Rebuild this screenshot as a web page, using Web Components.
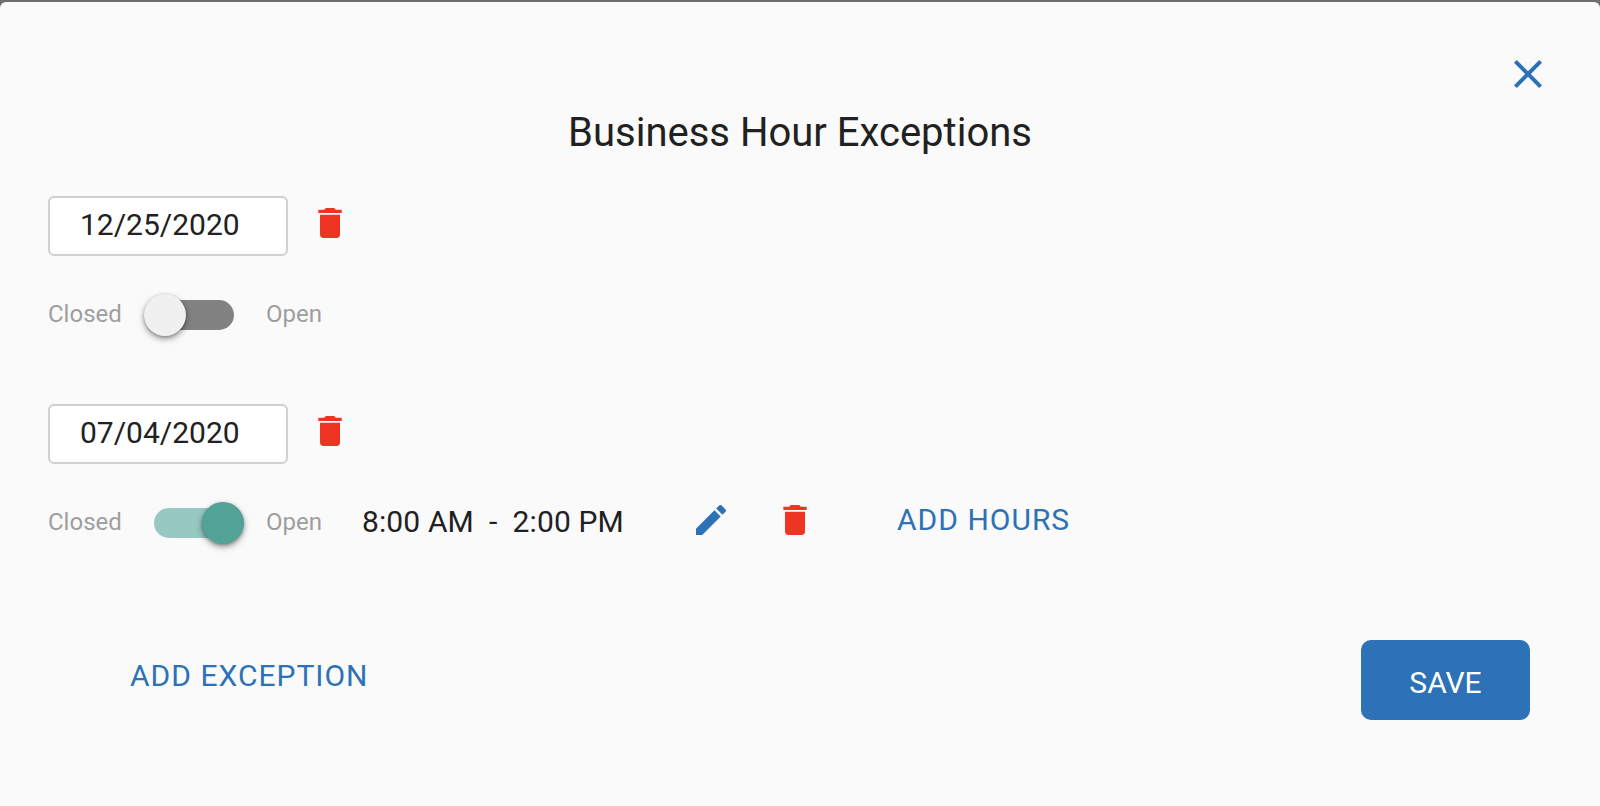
<!DOCTYPE html>
<html><head><meta charset="utf-8"><style>
html,body{margin:0;padding:0;background:#fafafa;}
body{font-family:Roboto,"Liberation Sans",sans-serif;color:#212121;}
</style></head><body>
<template id="i-trash"><style>:host{display:block;width:40px;height:40px;flex:none}svg{display:block;width:100%;height:100%;fill:#ee3524}</style><svg viewBox="0 0 24 24"><path d="M6 19c0 1.1.9 2 2 2h8c1.1 0 2-.9 2-2V7H6v12zM19 4h-3.5l-1-1h-5l-1 1H5v2h14V4z"/></svg></template>
<template id="i-edit"><style>:host{display:block;width:40px;height:40px;flex:none}svg{display:block;width:100%;height:100%;fill:#2d71b7}</style><svg viewBox="0 0 24 24"><path d="M3 17.25V21h3.75L17.81 9.94l-3.75-3.75L3 17.25zM20.71 7.04c.39-.39.39-1.02 0-1.41l-2.34-2.34c-.39-.39-1.02-.39-1.41 0l-1.83 1.83 3.75 3.75 1.83-1.83z"/></svg></template>
<template id="i-close"><style>:host{display:block;width:48px;height:48px;flex:none}svg{display:block;width:100%;height:100%;fill:#2d71b7}</style><svg viewBox="0 0 24 24"><path d="M19 6.41 17.59 5 12 10.59 6.41 5 5 6.41 10.59 12 5 17.59 6.41 19 12 13.41 17.59 19 19 17.59 13.41 12z"/></svg></template>
<template id="t-toggle"><style>
:host{display:block;position:relative;width:100px;height:42px;flex:none}
.track{position:absolute;left:10px;top:6px;width:80px;height:30px;border-radius:15px;background:#828282}
.knob{position:absolute;left:0;top:0;width:42px;height:42px;border-radius:50%;background:#f0f0f0;box-shadow:0 3px 6px rgba(0,0,0,.38),0 1px 3px rgba(0,0,0,.22)}
:host([on]) .track{background:#97c8c2}
:host([on]) .knob{left:58px;background:#52a297}
</style><div class="track"></div><div class="knob"></div></template>
<template id="t-date"><style>
:host{display:block;box-sizing:border-box;width:240px;height:60px;background:#fff;border:2px solid #d0d0d0;border-radius:6px;padding-left:30px;font-size:30px;line-height:54px;color:#212121;flex:none}
</style><slot></slot></template>
<template id="t-link"><style>
:host{display:block;color:#2d71b7;font-size:30px;letter-spacing:1px;line-height:40px;white-space:nowrap}
</style><slot></slot></template>
<template id="t-save"><style>
:host{display:flex;align-items:center;justify-content:center;box-sizing:border-box;width:169px;height:80px;padding-top:5px;background:#2d71b7;border-radius:10px;color:#fff;font-size:30px;line-height:40px;flex:none}
</style><slot></slot></template>
<template id="t-row"><style>
:host{display:block}
.date{display:flex;align-items:flex-start;gap:22px}
.date ::slotted(i-trash){margin-top:7px}
.hours{display:flex;align-items:center;height:42px;margin-top:38px}
.lab{color:#9e9e9e;font-size:24px;line-height:40px;margin-bottom:2px}
.closed{width:96px}.open{margin-left:22px;width:96px}
</style><div class="date"><slot name="date"></slot><slot name="del"></slot></div>
<div class="hours"><span class="lab closed">Closed</span><slot name="toggle"></slot><span class="lab open">Open</span><slot name="extra"></slot></div></template>
<template id="t-hours"><style>
:host{display:flex;align-items:center;height:42px}
.time{font-size:30px;letter-spacing:.12px;line-height:40px;white-space:pre;width:329px;color:#212121;margin-bottom:2px}
.edit{margin-right:44px;margin-bottom:6px}
i-trash{margin-bottom:6px}
.add{margin-left:82px;margin-bottom:6px}
</style><span class="time">8:00 AM&nbsp; -&nbsp; 2:00 PM</span><i-edit class="edit"></i-edit><i-trash></i-trash><x-link class="add">ADD HOURS</x-link></template>
<template id="t-dialog"><style>
:host{display:block;box-sizing:border-box;height:806px;background:#6f6f6f;padding-top:2px}
.sheet{box-sizing:border-box;height:804px;background:#fafafa;border-radius:6px 6px 0 0;padding:48px 48px 0}
.top{display:flex;justify-content:flex-end}
h1{margin:15px 0 0;text-align:center;font-weight:400;font-size:40px;line-height:40px;color:#212121}
.list{display:flex;flex-direction:column;gap:68px;margin-top:43px}
.foot{display:flex;justify-content:space-between;align-items:center;margin-top:96px;padding:0 22px 0 82px}
.foot x-link{margin-bottom:9px}
</style><div class="sheet"><div class="top"><i-close></i-close></div><h1>Business Hour Exceptions</h1>
<div class="list"><slot></slot></div>
<div class="foot"><x-link>ADD EXCEPTION</x-link><x-save>SAVE</x-save></div></div></template>

<x-dialog>
<x-row><x-date slot="date">12/25/2020</x-date><i-trash slot="del"></i-trash><x-toggle slot="toggle"></x-toggle></x-row>
<x-row><x-date slot="date">07/04/2020</x-date><i-trash slot="del"></i-trash><x-toggle slot="toggle" on></x-toggle><x-hours slot="extra"></x-hours></x-row>
</x-dialog>
<script>
const reg=(name,id)=>customElements.define(name,class extends HTMLElement{constructor(){super();this.attachShadow({mode:'open'}).appendChild(document.getElementById(id).content.cloneNode(true));}});
reg('i-trash','i-trash');reg('i-edit','i-edit');reg('i-close','i-close');reg('x-toggle','t-toggle');reg('x-date','t-date');reg('x-link','t-link');reg('x-save','t-save');reg('x-row','t-row');reg('x-hours','t-hours');reg('x-dialog','t-dialog');
</script>
</body></html>
